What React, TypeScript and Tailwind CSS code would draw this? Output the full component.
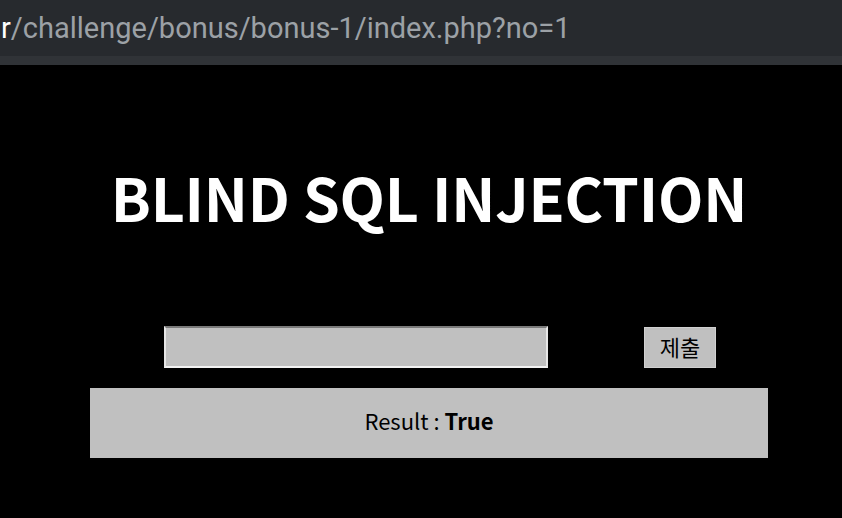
export default function App() {
  return (
    <div className="w-[842px] h-[518px] bg-black overflow-hidden flex flex-col">
      {/* address bar */}
      <div className="h-[56px] bg-[#272a2e] flex items-center overflow-hidden whitespace-nowrap">
        <span className="text-[29px] leading-none text-[#9ca1a6] font-['Roboto',sans-serif] pl-[1px]">
          <span className="text-white">r</span>/challenge/bonus/bonus-1/index.php?no=1
        </span>
      </div>
      <div className="h-[9px] bg-[#303337]" />

      <div className="ml-[90px] w-[678px] flex flex-col items-center font-['Noto_Sans_CJK_KR','Noto_Sans',sans-serif]">
        <h1 className="mt-[102px] text-[59px] leading-none font-bold text-white tracking-[-0.2px]">
          BLIND SQL INJECTION
        </h1>

        <div className="mt-[100px] w-full flex items-center">
          <input
            type="text"
            className="ml-[74px] w-[384px] h-[42px] bg-[#c0c0c0] border-[2px] border-t-[#7b7b7b] border-l-[#e6e6e6] border-r-[#e6e6e6] border-b-[#f2f2f2] outline-none"
          />
          <button className="ml-[96px] w-[72px] h-[41px] pb-[3px] bg-[#c0c0c0] border border-[#d0d0d0] text-[22px] text-black leading-none">
            제출
          </button>
        </div>

        <div className="mt-[20px] w-full h-[70px] pb-[6px] bg-[#c0c0c0] flex items-center justify-center text-[22px] text-black">
          <span>
            Result : <b className="font-bold">True</b>
          </span>
        </div>
      </div>
    </div>
  )
}
